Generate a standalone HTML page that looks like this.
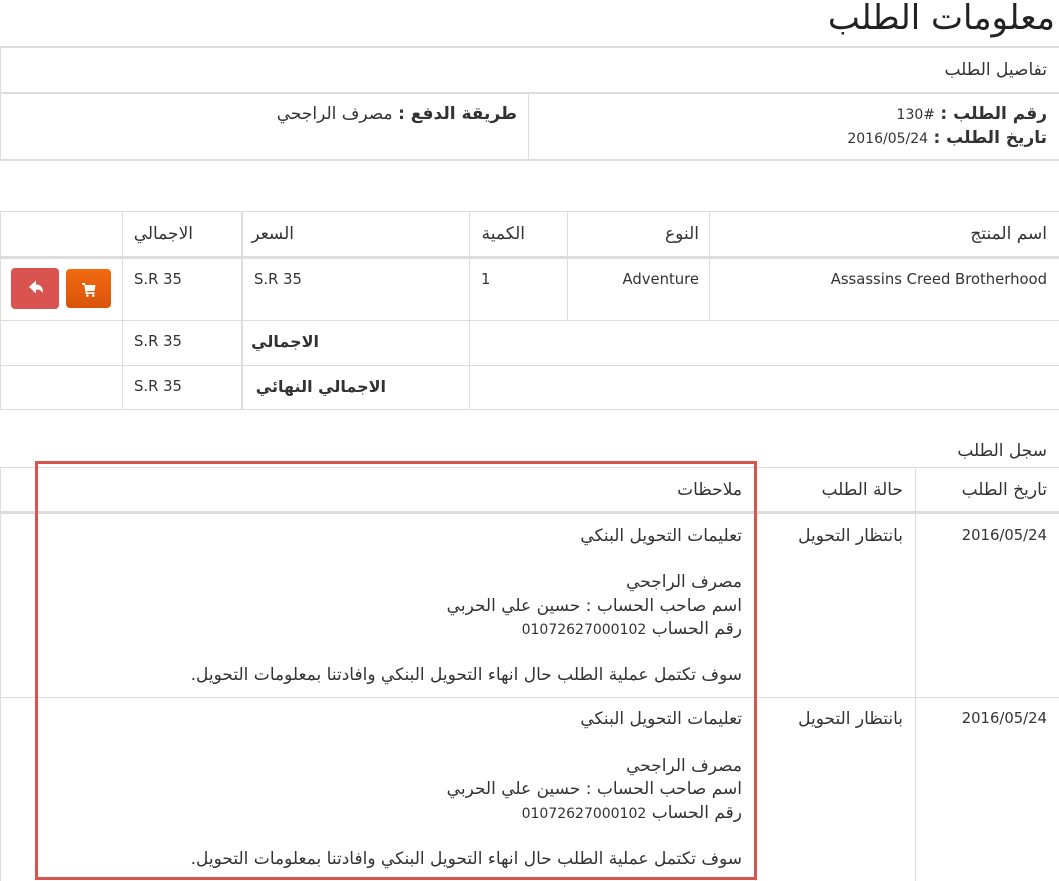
<!DOCTYPE html>
<html><head><meta charset="utf-8"><style>
body{margin:0;width:1059px;height:881px;overflow:hidden;background:#fff;position:relative;font-family:"DejaVu Sans","Liberation Sans",sans-serif;color:#333;font-size:17px}
.h{position:absolute;height:1px;background:#ddd}
.v{position:absolute;width:1px;background:#ddd}
.t{position:absolute;direction:rtl;white-space:nowrap;line-height:22px;transform:translateY(-11px)}
.l{position:absolute;white-space:nowrap;line-height:20px;transform:translateY(-10px);font-size:14.8px}
.n{font-size:14px}
b{font-weight:bold}
</style></head><body>
<div class="t" style="right:4px;top:18px;font-size:34px;line-height:40px;transform:translateY(-20px);color:#222">معلومات الطلب</div>

<!-- panel -->
<div class="h" style="left:0;right:0;top:46px;height:2px"></div>
<div class="h" style="left:0;right:0;top:92px;height:2px"></div>
<div class="h" style="left:0;right:0;top:159px;height:2px"></div>
<div class="v" style="left:0;top:46px;height:114px"></div>
<div class="v" style="left:528px;top:93px;height:67px"></div>
<div class="t" style="right:12px;top:70px">تفاصيل الطلب</div>
<div class="t" style="right:12px;top:114px"><b>رقم الطلب :</b> <span class="n">#130</span></div>
<div class="t" style="right:12px;top:138px"><b>تاريخ الطلب :</b> <span class="n">2016/05/24</span></div>
<div class="t" style="right:542px;top:114px"><b>طريقة الدفع :</b> مصرف الراجحي</div>

<!-- table 1 -->
<div class="h" style="left:0;right:0;top:211px"></div>
<div class="h" style="left:0;right:0;top:256px;height:3px"></div>
<div class="h" style="left:0;right:0;top:320px"></div>
<div class="h" style="left:0;right:0;top:365px"></div>
<div class="h" style="left:0;right:0;top:409px"></div>
<div class="v" style="left:0;top:211px;height:199px"></div>
<div class="v" style="left:122px;top:211px;height:199px"></div>
<div class="v" style="left:241px;top:211px;height:199px;width:2px"></div>
<div class="v" style="left:469px;top:211px;height:199px"></div>
<div class="v" style="left:567px;top:211px;height:110px"></div>
<div class="v" style="left:709px;top:211px;height:110px"></div>
<div class="t" style="right:12px;top:234px">اسم المنتج</div>
<div class="t" style="right:360px;top:234px">النوع</div>
<div class="t" style="right:534px;top:234px">الكمية</div>
<div class="t" style="right:765px;top:234px">السعر</div>
<div class="t" style="right:866px;top:234px">الاجمالي</div>
<div class="l" style="right:12px;top:280px">Assassins Creed Brotherhood</div>
<div class="l" style="right:360px;top:280px">Adventure</div>
<div class="l" style="left:481px;top:280px">1</div>
<div class="l" style="left:254px;top:280px">S.R 35</div>
<div class="l" style="left:134px;top:280px">S.R 35</div>
<div class="l" style="left:134px;top:342px">S.R 35</div>
<div class="l" style="left:134px;top:387px">S.R 35</div>
<div class="t" style="right:740px;top:342px;font-size:16px"><b>الاجمالي</b></div>
<div class="t" style="right:673px;top:387px;font-size:16px"><b>الاجمالي النهائي</b></div>
<div style="position:absolute;left:11px;top:268px;width:48px;height:41px;background:#d9534f;border-radius:4px">
<svg width="48" height="41" viewBox="0 0 48 41"><path d="M18 19 L25 12.5 L25 16.5 C30 16.5 32 19.5 32 25 C30 22 28 21.5 25 21.5 L25 25.5 Z" fill="#fff"/></svg></div>
<div style="position:absolute;left:66px;top:269px;width:45px;height:39px;background:linear-gradient(#f26a10,#d9540a);border-radius:4px">
<svg width="45" height="39" viewBox="0 0 45 39"><path d="M16 14 H19 L19.5 16 H29.5 L28.5 22 H20.8 L21.1 23.3 H28.5 V25 H19.8 L18.2 15.8 H16 Z" fill="#fff"/><circle cx="21.3" cy="26.5" r="1.3" fill="#fff"/><circle cx="27.3" cy="26.5" r="1.3" fill="#fff"/></svg></div>

<!-- table 2 -->
<div class="t" style="right:12px;top:451px">سجل الطلب</div>
<div class="h" style="left:0;right:0;top:467px"></div>
<div class="h" style="left:0;right:0;top:511px;height:3px"></div>
<div class="h" style="left:0;right:0;top:697px"></div>
<div class="v" style="left:0;top:467px;height:414px"></div>
<div class="v" style="left:915px;top:467px;height:414px"></div>
<div class="v" style="left:755px;top:467px;height:414px"></div>
<div class="t" style="right:12px;top:490px">تاريخ الطلب</div>
<div class="t" style="right:156px;top:490px">حالة الطلب</div>
<div class="t" style="right:317px;top:490px">ملاحظات</div>

<div class="l" style="right:12px;top:536px">2016/05/24</div>
<div class="t" style="right:156px;top:536px">بانتظار التحويل</div>
<div class="t" style="right:317px;top:536px">تعليمات التحويل البنكي</div>
<div class="t" style="right:317px;top:582px">مصرف الراجحي</div>
<div class="t" style="right:317px;top:606px">اسم صاحب الحساب : حسين علي الحربي</div>
<div class="t" style="right:317px;top:629px">رقم الحساب <span class="n">01072627000102</span></div>
<div class="t" style="right:317px;top:675px">سوف تكتمل عملية الطلب حال انهاء التحويل البنكي وافادتنا بمعلومات التحويل.</div>

<div class="l" style="right:12px;top:719px">2016/05/24</div>
<div class="t" style="right:156px;top:719px">بانتظار التحويل</div>
<div class="t" style="right:317px;top:719px">تعليمات التحويل البنكي</div>
<div class="t" style="right:317px;top:766px">مصرف الراجحي</div>
<div class="t" style="right:317px;top:789px">اسم صاحب الحساب : حسين علي الحربي</div>
<div class="t" style="right:317px;top:813px">رقم الحساب <span class="n">01072627000102</span></div>
<div class="t" style="right:317px;top:859px">سوف تكتمل عملية الطلب حال انهاء التحويل البنكي وافادتنا بمعلومات التحويل.</div>

<div style="position:absolute;left:35px;top:461px;width:716px;height:413px;border:3px solid #d9534f"></div>
</body></html>
